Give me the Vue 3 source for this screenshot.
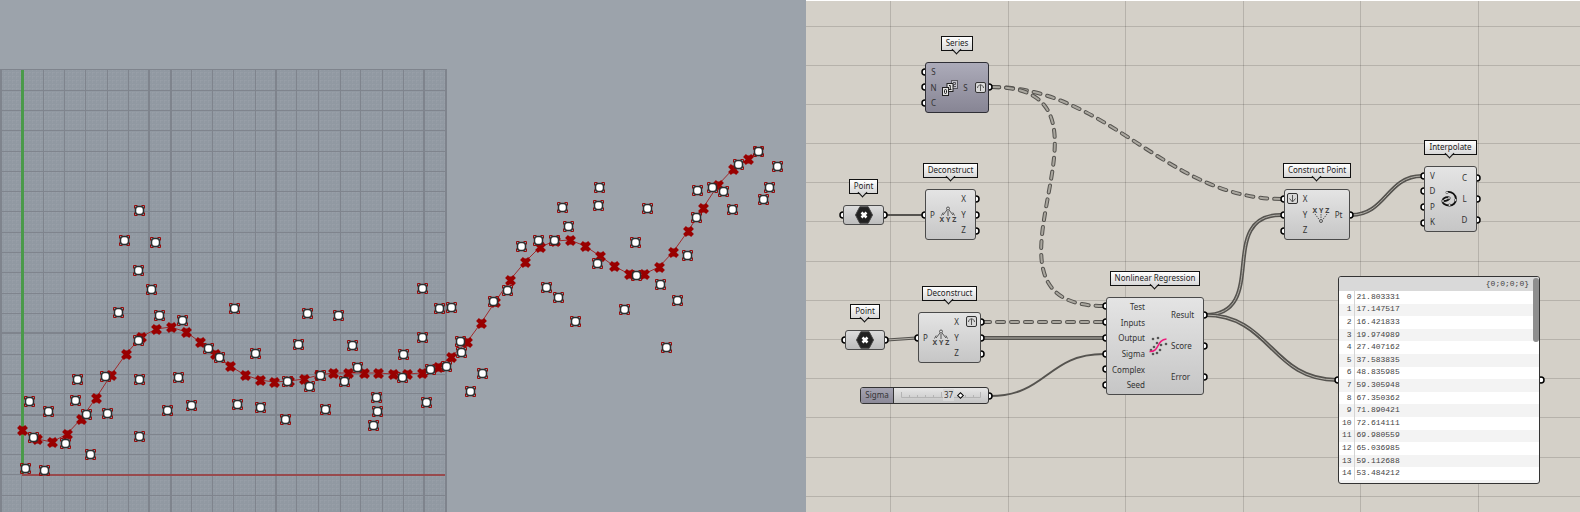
<script setup>
import { ref } from 'vue'

const pairs = (text) => text.trim().split(/\s+/).map((p) => p.split(',').map(Number))

// Viewport construction grid
const gridX = [43.5, 64.5, 85.5, 107.5, 128.5, 191.5, 212.5, 233.5, 255.5, 296.5, 318.5, 340.5, 360.5, 382.5, 403.5, 21.5]
const gridXMajor = [1, 149, 171, 276, 424, 446]
const gridY = [69.5, 90.5, 110.5, 130.5, 151.5, 171.5, 191.5, 211.5, 232.5, 252.5, 272.5, 293.5, 313.5, 354.5, 374.5, 393.5, 434.5, 454.5, 474.5, 495.5]
const gridYMajor = [333, 415]

const samples = pairs(`
139,210 124,240 155,242 138,270 151,289 118,312 159,315 182,320 234,308 138,340 208,348 219,357 255,353
77,379 105,376 139,379 178,377 29,401 75,400 48,411 86,414 107,413 167,410 191,405 237,404 260,407
33,437 65,443 139,436 90,454 25,468 44,470 422,288 307,313 338,315 439,308 451,307 298,344 352,345
422,337 403,354 460,341 461,352 357,367 287,381 320,375 309,386 344,381 402,377 430,369 446,366
325,409 285,419 376,397 377,411 373,425 426,402 470,391 482,373 493,301 507,290 521,246 538,240
554,240 568,226 562,207 599,187 598,205 647,208 597,263 635,242 636,275 660,284 677,300 666,347
624,309 575,321 546,287 558,297 687,255 696,217 697,190 712,187 723,191 732,209 738,164 758,151
777,166 769,187 763,199`)

const fitted = pairs(`
22,430 37,439 52,442 67,434 81,419 96,398 111,375 126,354 141,337 156,329 171,327 186,332 200,342
215,354 230,366 245,375 260,380 274,382 289,381 304,379 319,375 333,373 348,373 364,373 378,373
393,374 407,374 422,373 438,367 451,357 467,342 481,323 495,302 510,280 525,262 540,247 555,241
570,240 585,246 600,256 614,266 629,274 644,274 659,267 673,252 688,231 703,208 718,185 733,169
748,159 758,151`)
const fittedLine = fitted.map((p) => p.join(',')).join(' ')

// Node canvas, coordinates relative to the canvas pane
const canvasX = [84.5, 202.5, 319.5, 437.5, 554.5, 672.5]
const canvasY = [26.5, 65.5, 104.5, 143.5, 182.5, 221.5, 261.5, 300.5, 339.5, 378.5, 417.5, 457.5, 496.5]

const wires = [
  { kind: 'dashed', d: 'M186 87C302 87 360 199 476 199' },
  { kind: 'dashed', d: 'M186 87C338 87 146 306 298 306' },
  { kind: 'dashed', d: 'M177 322H298' },
  { kind: 'list', d: 'M177 338H298' },
  { kind: 'list thin', d: 'M81 340L110 338' },
  { kind: 'list', d: 'M399 315C465 315 409 215 475 215' },
  { kind: 'list', d: 'M399 315C465 315 465 380 531 380' },
  { kind: 'list', d: 'M545 215C580 215 581 176 616 176' },
  { kind: 'item', d: 'M80 215H117' },
  { kind: 'item', d: 'M184 396C241 396 241 354 298 354' },
]

const ports = pairs(`
119,72 119,87 119,103 183,87 37,215 78,215 119,215 170,199 170,215 170,231
39,340 79,340 112,338 175,322 175,338 175,354 183,396
300,306 300,322 300,338 300,354 300,369 300,385 398,315 398,346 398,377
478,199 478,215 478,231 544,215 618,176 618,191 618,207 618,223 671,178 671,199 671,220
532,380 735,380`)

const nodes = [
  { id: 'series', title: 'Series', x: 119, y: 36, w: 64, h: 51, inputs: ['S', 'N', 'C'], icon: 'series', outputs: ['S'], outMode: ['graft'] },
  { id: 'point-a', title: 'Point', x: 37, y: 179, w: 41, h: 20, icon: 'hex' },
  { id: 'decon-a', title: 'Deconstruct', x: 119, y: 163, w: 51, h: 51, inputs: ['P'], icon: 'decon', outputs: ['X', 'Y', 'Z'] },
  { id: 'point-b', title: 'Point', x: 39, y: 304, w: 40, h: 20, icon: 'hex' },
  { id: 'decon-b', title: 'Deconstruct', x: 112, y: 286, w: 63, h: 51, inputs: ['P'], icon: 'decon', outputs: ['X', 'Y', 'Z'], outMode: ['graft', '', ''] },
  { id: 'regression', title: 'Nonlinear Regression', x: 300, y: 271, w: 98, h: 98, inputs: ['Test', 'Inputs', 'Output', 'Sigma', 'Complex', 'Seed'], icon: 'regression', outputs: ['Result', 'Score', 'Error'] },
  { id: 'construct', title: 'Construct Point', x: 478, y: 163, w: 66, h: 51, inMode: ['flatten', '', ''], inputs: ['X', 'Y', 'Z'], icon: 'construct', outputs: ['Pt'] },
  { id: 'interpolate', title: 'Interpolate', x: 618, y: 140, w: 53, h: 66, inputs: ['V', 'D', 'P', 'K'], icon: 'interpolate', outputs: ['C', 'L', 'D'] },
]

const at = (n) => ({ left: n.x + 'px', top: n.y + 'px', width: n.w + 'px' })
const tall = (n) => ({ height: n.h + 'px' })

const dots = pairs('5,3 10,2 9,7 6,11 3,14 13,9 18,8 12,14 9,17 5,18')

const sigma = ref(37)
const results = ['21.803331', '17.147517', '16.421833', '19.974989', '27.407162', '37.583835', '48.835985', '59.305948', '67.350362', '71.890421', '72.614111', '69.980559', '65.036985', '59.112688', '53.484212']
</script>

<template>
  <main class="workspace">
    <section class="viewport" aria-label="Viewport">
      <svg class="layer">
        <defs>
          <pattern id="fine" width="4" height="4" patternUnits="userSpaceOnUse">
            <path d="M0 .5H3M.5 0V3" class="fine" />
          </pattern>
          <g id="cross">
            <path d="M-4 -4L4 4M4 -4L-4 4" class="cross" />
            <rect x="-2.5" y="-4" width="5" height="8" class="core" />
          </g>
          <g id="sample">
            <path d="M-5 -2V-5H-2M2 -5H5V-2M5 2V5H2M-2 5H-5V2" class="corner" />
            <rect x="-4" y="-4" width="8" height="8" rx="3" class="ring" />
          </g>
        </defs>
        <rect x="0" y="69" width="446" height="100%" class="plane" />
        <rect x="0" y="69" width="446" height="100%" fill="url(#fine)" />
        <line v-for="x in gridX" :key="'x' + x" :x1="x" :x2="x" y1="69" y2="100%" class="minor" />
        <line v-for="y in gridY" :key="'y' + y" x1="0" x2="446" :y1="y" :y2="y" class="minor" />
        <line v-for="x in gridXMajor" :key="'X' + x" :x1="x" :x2="x" y1="69" y2="100%" class="major" />
        <line v-for="y in gridYMajor" :key="'Y' + y" x1="0" x2="446" :y1="y" :y2="y" class="major" />
        <rect x="22" y="474" width="423" height="2" class="axis-x" />
        <rect x="21" y="70" width="3" height="404" class="axis-y" />
        <polyline :points="fittedLine" class="fit" />
        <use v-for="(p, i) in fitted" :key="'f' + i" href="#cross" :x="p[0] + 0.5" :y="p[1] + 0.5" />
        <use v-for="(p, i) in samples" :key="'s' + i" href="#sample" :x="p[0] + 0.5" :y="p[1] + 0.5" />
      </svg>
    </section>

    <section class="canvas" aria-label="Definition">
      <svg class="layer">
        <line v-for="x in canvasX" :key="'x' + x" :x1="x" :x2="x" y1="1" y2="100%" class="rule" />
        <line v-for="y in canvasY" :key="'y' + y" x1="0" x2="100%" :y1="y" :y2="y" class="rule" />
        <g v-for="w in wires" :key="w.d" class="wire" :class="w.kind">
          <path :d="w.d" class="outer" />
          <path v-if="w.kind !== 'item'" :d="w.d" class="inner" />
        </g>
        <circle v-for="(p, i) in ports" :key="'p' + i" :cx="p[0]" :cy="p[1]" r="3" class="port" />
      </svg>

      <article v-for="n in nodes" :key="n.id" class="node" :style="at(n)">
        <h2 class="tag">{{ n.title }}</h2>
        <div class="body" :class="'is-' + n.icon" :style="tall(n)">
          <div v-if="n.inMode" class="col modes">
            <span v-for="(m, i) in n.inMode" :key="i" class="cell">
              <svg v-if="m" class="mode" viewBox="0 0 11 11"><rect x=".5" y=".5" width="10" height="10" rx="1.5" /><path d="M5.5 2V9M2.5 5.5L5.5 9L8.5 5.5" /></svg>
            </span>
          </div>
          <div v-if="n.inputs" class="col inputs">
            <span v-for="(p, i) in n.inputs" :key="i" class="cell">{{ p }}</span>
          </div>
          <div class="art">
            <svg v-if="n.icon === 'series'" class="icon" viewBox="0 0 18 18">
              <g class="page faded"><rect x="10.5" y="1.5" width="6" height="8" /><path d="M12 3.5H14.5V5.5H12.5V7.5H15" /></g>
              <g class="page"><rect x="6" y="4.5" width="6" height="8" /><path d="M8 6.5H9.3V10.5M8 10.5H10.5" /></g>
              <g class="page"><rect x="1.5" y="8.5" width="6" height="8" /><rect x="3.5" y="10.5" width="2" height="4" rx="1" /></g>
            </svg>
            <svg v-else-if="n.icon === 'decon'" class="icon" viewBox="0 0 18 18">
              <path d="M8 4L4 9M9 5V10M10 4L14 9M2.5 9.5L4.2 6.5M15.5 9.5L13.8 6.5" class="thin" /><circle cx="9" cy="2.5" r="1.5" class="thin" />
              <text x="9" y="16" class="axes">X Y Z</text>
            </svg>
            <svg v-else-if="n.icon === 'construct'" class="icon" viewBox="0 0 18 18">
              <text x="9" y="7" class="axes">X Y Z</text>
              <path d="M3 8L7.5 14M9 8V13M15 8L10.5 14" class="thin dotted" /><circle cx="9" cy="15" r="1.5" class="thin" />
            </svg>
            <svg v-else-if="n.icon === 'regression'" class="icon big" viewBox="0 0 20 20">
              <circle v-for="(d, i) in dots" :key="i" :cx="d[0]" :cy="d[1]" r="1.3" class="dot" />
              <path d="M1.5 15.5C12 16 8 4 18.5 3" class="trend" />
            </svg>
            <svg v-else-if="n.icon === 'interpolate'" class="icon" viewBox="0 0 18 18">
              <path d="M7 2C12 1 16 5 16 9C16 13 13 15.5 9.5 15.5C5 15.5 2 13 2.5 10.5C3 7.5 8 6 9.5 8C10 9.5 6 11 4 11" class="curl" />
              <circle cx="7" cy="2.5" r="1.2" /><circle cx="15.5" cy="10" r="1.2" /><circle cx="9.5" cy="15" r="1.2" /><circle cx="3" cy="11" r="1.2" /><circle cx="9" cy="8" r="1.2" />
            </svg>
            <svg v-else class="icon" viewBox="0 0 18 18">
              <path d="M4.8 .8H13.2L17.5 9L13.2 17.2H4.8L.5 9Z" class="hex" />
              <path d="M6.5 6.5L11.5 11.5M11.5 6.5L6.5 11.5" class="hex-x" />
            </svg>
          </div>
          <div v-if="n.outputs" class="col outputs">
            <span v-for="(p, i) in n.outputs" :key="i" class="cell">{{ p }}</span>
          </div>
          <div v-if="n.outMode" class="col modes">
            <span v-for="(m, i) in n.outMode" :key="i" class="cell">
              <svg v-if="m" class="mode" viewBox="0 0 11 11"><rect x=".5" y=".5" width="10" height="10" rx="1.5" /><path d="M5.5 9V2.5M2.5 6C2.5 4 4 3 5.5 3C7 3 8.5 4 8.5 6" /></svg>
            </span>
          </div>
        </div>
      </article>

      <div class="slider">
        <label for="sigma">Sigma</label>
        <div class="track">
          <svg class="ticks" viewBox="0 0 80 6"><path d="M.5 0V5.5H79.5V0M8.5 3V5M16.5 3V5M24.5 3V5M32.5 3V5M40.5 0V5M48.5 3V5M56.5 3V5M64.5 3V5M72.5 3V5" /></svg>
          <output for="sigma">{{ sigma }}</output>
          <input id="sigma" v-model="sigma" type="range" min="0" max="50" />
        </div>
      </div>

      <div class="panel">
        <div class="path">{0;0;0;0}</div>
        <table>
          <tbody>
            <tr v-for="(r, i) in results" :key="i">
              <th scope="row">{{ i }}</th>
              <td>{{ r }}</td>
            </tr>
          </tbody>
        </table>
        <div class="thumb"></div>
      </div>
    </section>
  </main>
</template>

<style>
body { margin: 0; background: #9ca3ab; }
</style>

<style scoped>
.workspace {
  display: grid;
  grid-template-columns: 806fr 774fr;
  min-height: 100vh;
  font-family: "Noto Sans", "Open Sans", sans-serif;
  font-size: 8px;
  line-height: 12px;
  color: #333;
}
.viewport, .canvas { position: relative; overflow: hidden; }
.viewport { background: #9ca3ab; }
.canvas { background: #d4d0c8; box-shadow: inset 0 1px #fff; }
.layer { position: absolute; inset: 0; width: 100%; height: 100%; }

.plane { fill: #9199a2; }
.fine { stroke: #9ba3ac; stroke-width: 1; stroke-opacity: .45; fill: none; }
.minor { stroke: #7f848d; stroke-width: 1; }
.major { stroke: #7f848d; stroke-width: 2; }
.axis-x { fill: #984a4d; }
.axis-y { fill: #4a9a4a; }
.fit { fill: none; stroke: #a02a2c; stroke-width: 1; }
.cross { stroke: #990000; stroke-width: 4; fill: none; }
.core { fill: #990000; }
.corner { stroke: #990a0a; stroke-width: 1; fill: none; }
.ring { fill: #fff; stroke: #2c2f30; stroke-width: 1.5; }

.rule { stroke: #000; stroke-opacity: .14; stroke-width: 1; }
.wire path { fill: none; }
.outer { stroke: #55534f; stroke-width: 4; }
.inner { stroke: #b4b1aa; stroke-width: 1; }
.item .outer { stroke-width: 2; }
.thin .outer { stroke-width: 3; }
.dashed path { stroke-linecap: round; stroke-dasharray: 7 7; }
.dashed .inner { stroke: #aaa79f; stroke-width: 2; }
.port { fill: #fff; stroke: #000; stroke-width: 1.5; }

.node {
  position: absolute;
  display: flex;
  flex-direction: column;
  align-items: center;
  gap: 11px;
}
.tag {
  position: relative;
  margin: 0;
  padding: 0 4px 1px;
  border: 1px solid #111;
  background: linear-gradient(#fff, #d8d8d8);
  font: inherit;
  white-space: nowrap;
  color: #222;
}
.tag::after {
  content: "";
  position: absolute;
  top: 9px;
  left: 50%;
  width: 6px;
  height: 6px;
  margin-left: -4px;
  border: solid #111;
  border-width: 0 1px 1px 0;
  background: linear-gradient(135deg, transparent 50%, #d8d8d8 50%);
  transform: rotate(45deg);
}
.body {
  box-sizing: border-box;
  display: grid;
  width: 100%;
  padding: 1px 0;
  border: 1px solid #4a4a4a;
  border-radius: 3px;
  background: linear-gradient(#e4e4e4, #c6c6c6);
}
.is-series { grid-template-columns: 15px 18px 13px 1fr; background: linear-gradient(#acabb9, #878594); border-color: #2e2e35; }
.is-decon { grid-template-columns: 13px 18px 13px 1fr; }
.is-construct { grid-template-columns: 14px 12px 20px 15px; }
.is-regression { grid-template-columns: 38px 26px 1fr; }
.is-interpolate { grid-template-columns: 15px 18px 13px; }
.is-hex { padding: 0; background: linear-gradient(#dcdcdc, #bdbdbd); }
.col { display: flex; flex-direction: column; min-width: 0; }
.cell { flex: 1; display: flex; align-items: center; justify-content: center; }
.is-regression .inputs .cell { justify-content: flex-end; }
.is-regression .outputs .cell { justify-content: flex-start; }
.art { display: flex; align-items: center; justify-content: center; min-width: 0; min-height: 0; }
.icon { display: block; width: 18px; height: 18px; flex: none; }
.big { width: 20px; height: 20px; }
.mode { width: 11px; height: 11px; fill: none; stroke: #555; }
.mode rect { fill: #d8d8d8; stroke: #333; }
.page rect, .page path { fill: #e4e4e4; stroke: #222; stroke-width: 1; }
.page path { fill: none; }
.faded { opacity: .55; }
.thin { fill: none; stroke: #555; stroke-width: 1; }
.dotted { stroke-dasharray: 1.5 1; }
.axes { font-size: 7px; font-weight: 700; text-anchor: middle; fill: #444; }
.dot { fill: #555; }
.trend { fill: none; stroke: #ee1c7c; stroke-width: 1.5; }
.curl { fill: none; stroke: #111; stroke-width: 1.8; }
.is-interpolate circle { fill: #eee; stroke: #222; stroke-width: .5; }
.hex { fill: #222; stroke: #444; stroke-width: 1; }
.hex-x { stroke: #fff; stroke-width: 2.5; }

.slider {
  position: absolute;
  left: 54px;
  top: 387px;
  box-sizing: border-box;
  display: flex;
  width: 129px;
  height: 17px;
  border: 1px solid #333;
  border-radius: 3px;
  background: linear-gradient(#e6e6e6, #c4c4c4);
  overflow: hidden;
}
.slider label {
  width: 32px;
  border-right: 1px solid #333;
  background: linear-gradient(#a5a4b2, #8b8998);
  line-height: 14px;
  text-align: center;
}
.track { position: relative; flex: 1; margin: 0 4px; }
.ticks { position: absolute; left: 3px; top: 4px; width: 80px; height: 6px; fill: none; stroke: #b4b4b4; }
output { position: absolute; left: 45px; top: 1px; padding: 0 1px; background: #d8d8d8; line-height: 12px; }
.track input {
  position: absolute;
  inset: 0;
  width: 86px;
  height: 15px;
  margin: 0;
  background: none;
  appearance: none;
}
.track input::-webkit-slider-thumb {
  appearance: none;
  box-sizing: border-box;
  width: 5px;
  height: 5px;
  border: 1px solid #000;
  background: #fff;
  transform: rotate(45deg);
}

.panel {
  position: absolute;
  left: 532px;
  top: 276px;
  box-sizing: border-box;
  width: 202px;
  padding-bottom: 3px;
  border: 1px solid #333;
  border-radius: 3px;
  background: #f3f3f3;
  font-family: "Liberation Mono", monospace;
  color: #444;
  overflow: hidden;
}
.path { height: 14px; padding-right: 10px; background: #d9d9d9; line-height: 13px; text-align: right; }
.panel table { width: 100%; height: 189px; border-collapse: collapse; background: #fff; }
.panel tr:nth-child(even) { background: #f3f3f3; }
.panel th, .panel td { padding: 0 0 1px; font-weight: 400; line-height: 10px; vertical-align: middle; }
.panel th { box-sizing: border-box; width: 15px; padding-right: 2px; border-right: 1px solid #d4d4d4; text-align: right; }
.panel td { padding-left: 2px; }
.thumb { position: absolute; top: 1px; right: 0; width: 6px; height: 64px; border-radius: 3px; background: #8e8e8e; }
</style>
